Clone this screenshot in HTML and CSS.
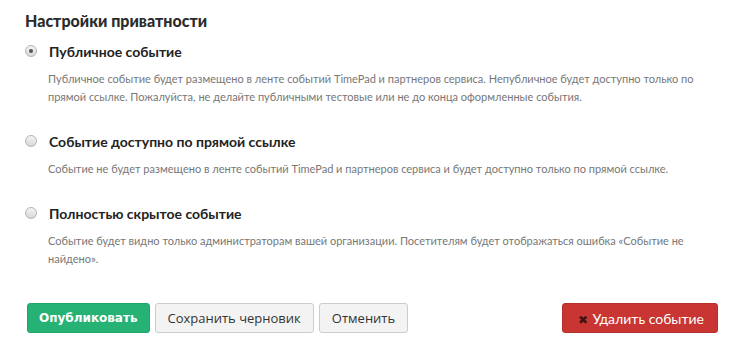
FILE: index.html
```html
<!DOCTYPE html>
<html lang="ru">
<head>
    <meta charset="UTF-8">
    <title>Настройки приватности</title>
    <link rel="stylesheet" href="styles.css">
</head>
<body>
    <div class="privacy">
        <h2>Настройки приватности</h2>

        <div class="option">
            <label class="option-title">
                <input type="radio" name="privacy" checked disabled>
                <span>Публичное событие</span>
            </label>
            <p class="option-desc">Публичное событие будет размещено в ленте событий TimePad и партнеров сервиса. Непубличное будет доступно только по прямой ссылке. Пожалуйста, не делайте публичными тестовые или не до конца оформленные события.</p>
        </div>

        <div class="option">
            <label class="option-title">
                <input type="radio" name="privacy" disabled>
                <span>Событие доступно по прямой ссылке</span>
            </label>
            <p class="option-desc">Событие не будет размещено в ленте событий TimePad и партнеров сервиса и будет доступно только по прямой ссылке.</p>
        </div>

        <div class="option">
            <label class="option-title">
                <input type="radio" name="privacy" disabled>
                <span>Полностью скрытое событие</span>
            </label>
            <p class="option-desc">Событие будет видно только администраторам вашей организации. Посетителям будет отображаться ошибка «Событие не найдено».</p>
        </div>
    </div>

    <div class="actions">
        <div class="actions-left">
            <button class="btn btn-publish">Опубликовать</button>
            <button class="btn btn-default">Сохранить черновик</button>
            <button class="btn btn-default">Отменить</button>
        </div>
        <button class="btn btn-delete"><span class="btn-icon">&#10006;</span>Удалить событие</button>
    </div>
</body>
</html>
```

FILE: styles.css
```css
body {
    margin: 0;
    padding: 11px 12px 0 25px;
    background: #fff;
    font-family: Lato, "Open Sans", sans-serif;
    color: #222;
}

.privacy h2 {
    margin: 0 0 10px;
    font-size: 16px;
    line-height: 20px;
    font-weight: 900;
    color: #2b2b2b;
}

.option {
    margin-bottom: 25px;
}

.option-title {
    display: flex;
    align-items: center;
    height: 20px;
    font-size: 14px;
    font-weight: bold;
    color: #222;
}

/* серый радио-переключатель как в оригинале */
.option-title input {
    appearance: none;
    -webkit-appearance: none;
    box-sizing: border-box;
    margin: 0 12px 0 0;
    width: 12px;
    height: 12px;
    border-radius: 50%;
    border: 1px solid #b4b4b4;
    background: linear-gradient(#f4f4f4, #d8d8d8);
    display: flex;
    align-items: center;
    justify-content: center;
}

.option-title input:checked::after {
    content: "";
    width: 4px;
    height: 4px;
    border-radius: 50%;
    background: #555;
}

.option-desc {
    margin: 9px 0 0 23px;
    font-size: 11px;
    line-height: 18px;
    color: #777;
}

.actions {
    display: flex;
    justify-content: space-between;
    align-items: center;
    margin-top: 35px;
    padding-left: 2px;
}

.actions-left {
    display: flex;
    gap: 5px;
}

.btn {
    height: 30px;
    padding: 0 12px;
    border-radius: 3px;
    border: 1px solid #ccc;
    font-size: 13px;
    cursor: pointer;
}

.btn-publish {
    background: #27b275;
    border-color: #22a56b;
    color: #fff;
    font-family: "DejaVu Sans", sans-serif;
    font-weight: bold;
    font-size: 12px;
    padding: 0 11px;
}

.btn-default {
    background: #f3f3f3;
    color: #333;
    font-family: "Open Sans", sans-serif;
}

.btn-delete {
    background: #c93532;
    border-color: #b52f2c;
    color: #fff;
    font-family: Lato, sans-serif;
    font-size: 14px;
    padding: 0 13px 0 15px;
}

.btn-icon {
    color: #3d1312;
    font-size: 12px;
    margin-right: 5px;
}
```
